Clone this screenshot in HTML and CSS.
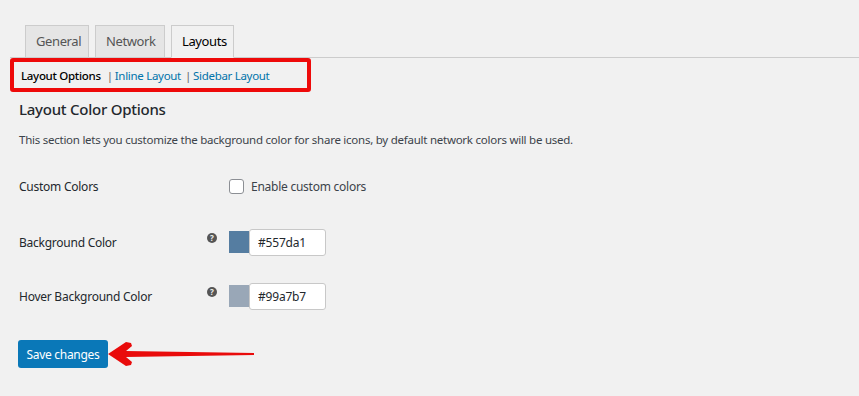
FILE: index.html
```html
<!DOCTYPE html>
<html lang="en">
<head>
    <meta charset="UTF-8">
    <title>Layouts | Share Settings</title>
    <link rel="stylesheet" href="styles.css">
</head>
<body>
    <div class="wrap">
        <nav class="tab-wrapper">
            <a href="#" class="tab">General</a>
            <a href="#" class="tab">Network</a>
            <a href="#" class="tab tab-active">Layouts</a>
        </nav>

        <div class="sub-links">
            <span class="current">Layout Options</span>
            <span class="sep">|</span><a href="#">Inline Layout</a>
            <span class="sep">|</span><a href="#">Sidebar Layout</a>
        </div>

        <h2 class="section-title">Layout Color Options</h2>
        <p class="section-desc">This section lets you customize the background color for share icons, by default network colors will be used.</p>

        <div class="form-table">
            <div class="form-row row-check">
                <div class="row-label">Custom Colors</div>
                <div class="row-help"></div>
                <label class="row-field check-field">
                    <span class="checkbox"></span>
                    Enable custom colors
                </label>
            </div>
            <div class="form-row row-bg">
                <div class="row-label">Background Color</div>
                <div class="row-help"><span class="help-icon">?</span></div>
                <div class="row-field">
                    <span class="swatch swatch-main"></span>
                    <input class="color-input" type="text" value="#557da1">
                </div>
            </div>
            <div class="form-row row-hover">
                <div class="row-label">Hover Background Color</div>
                <div class="row-help"><span class="help-icon">?</span></div>
                <div class="row-field">
                    <span class="swatch swatch-hover"></span>
                    <input class="color-input" type="text" value="#99a7b7">
                </div>
            </div>
        </div>

        <div class="submit-row">
            <button class="save-btn">Save changes</button>
            <svg class="arrow" width="150" height="30" viewBox="0 0 150 30">
                <polygon fill="#e90b0b" points="1,15 19,3 24,4 25,7 19,12 147,14 147,16 19,18 25,23 24,26 19,27"/>
            </svg>
        </div>
    </div>
</body>
</html>
```

FILE: styles.css
```css
* {
    margin: 0;
    padding: 0;
    box-sizing: border-box;
}
body {
    font-family: "Noto Sans", "Open Sans", sans-serif;
    background-color: #f1f1f1;
    color: #23282d;
    font-size: 12px;
    letter-spacing: -0.25px;
}
.wrap {
    padding: 25px 0 0 10px;
}
.tab-wrapper {
    display: flex;
    padding-left: 15px;
    border-bottom: 1px solid #cccccc;
}
.tab {
    display: block;
    height: 33px;
    line-height: 31px;
    padding: 0 10px;
    margin-right: 6px;
    margin-bottom: -1px;
    background-color: #e5e5e5;
    border: 1px solid #cccccc;
    color: #555;
    font-size: 13px;
    letter-spacing: -0.4px;
    text-decoration: none;
}
.tab:first-child {
    width: 64px;
}
.tab:nth-child(2) {
    width: 70px;
}
.tab-active {
    width: 63px;
    background-color: #f1f1f1;
    border-bottom-color: #f1f1f1;
    color: #000;
}
.sub-links {
    width: 301px;
    height: 34px;
    padding: 0 0 0 7px;
    display: flex;
    align-items: center;
    border: 4px solid #ee0a0a;
    border-radius: 3px;
    font-size: 11.5px;
    letter-spacing: -0.3px;
}
.sub-links .current {
    color: #000;
    font-weight: 500;
    margin-right: 6px;
}
.sub-links .sep {
    color: #666;
    margin-right: 2px;
}
.sub-links a {
    color: #0073aa;
    text-decoration: none;
    margin-right: 4px;
}
.section-title {
    font-size: 15px;
    font-weight: 500;
    margin: 7px 0 0 9px;
    line-height: 20px;
}
.section-desc {
    margin: 13px 0 0 9px;
    color: #3c434a;
    line-height: 16px;
    font-size: 11.5px;
}
.form-table {
    margin: 18px 0 0 9px;
}
.form-row {
    display: grid;
    grid-template-columns: 187px 23px auto;
    align-items: center;
}
.row-check {
    height: 40px;
}
.row-bg {
    height: 72px;
}
.row-hover {
    height: 36px;
}
.row-label {
    font-size: 12px;
    color: #23282d;
}
.help-icon {
    display: block;
    width: 10px;
    height: 10px;
    margin: 0 0 8px 1px;
    border-radius: 50%;
    background-color: #555;
    color: #f1f1f1;
    font-size: 8px;
    font-weight: bold;
    line-height: 10px;
    text-align: center;
    letter-spacing: 0;
}
.row-field {
    display: flex;
    align-items: center;
}
.check-field {
    gap: 7px;
    color: #3c434a;
}
.checkbox {
    display: block;
    width: 15px;
    height: 15px;
    background-color: #fff;
    border: 1px solid #8c8f94;
    border-radius: 3px;
}
.swatch {
    display: block;
    width: 20px;
    height: 22px;
}
.swatch-main {
    background-color: #557da1;
}
.swatch-hover {
    background-color: #99a7b7;
}
.color-input {
    width: 77px;
    height: 27px;
    padding: 0 8px;
    border: 1px solid #c8c8c8;
    border-radius: 3px;
    background-color: #fff;
    font-family: "Noto Sans", sans-serif;
    font-size: 12px;
    letter-spacing: -0.2px;
    color: #23282d;
}
.submit-row {
    display: flex;
    align-items: center;
    margin: 25px 0 0 8px;
}
.save-btn {
    width: 90px;
    height: 28px;
    border: none;
    border-radius: 3px;
    background-color: #0a78b8;
    color: #fff;
    font-family: "Noto Sans", sans-serif;
    font-size: 12px;
    letter-spacing: -0.3px;
}
.arrow {
    display: block;
    margin-left: -1px;
}
```
